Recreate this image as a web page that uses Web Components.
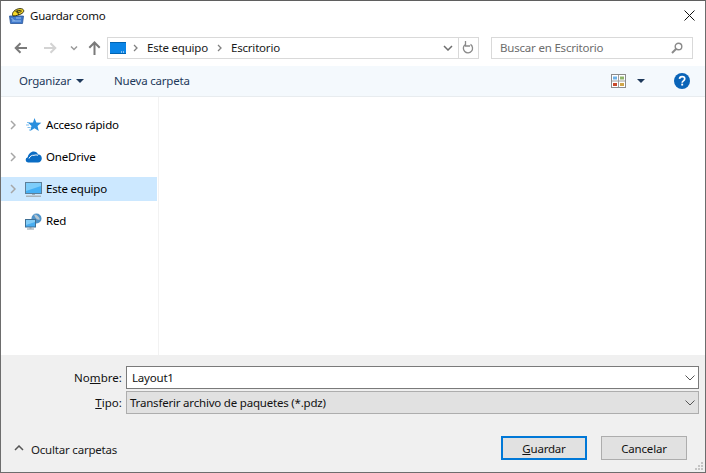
<!DOCTYPE html>
<html lang="es"><head><meta charset="utf-8"><title>Guardar como</title>
<style>html,body{margin:0;padding:0;background:#fff}body{font:12px "Noto Sans","Open Sans",sans-serif;color:#000}</style>
</head><body>
<file-dialog>
  <title-bar slot="title">Guardar como</title-bar>
  <nav-bar slot="nav"></nav-bar>
  <tool-bar slot="tools"></tool-bar>
  <nav-tree slot="tree">
    <tree-row icon="star">Acceso rápido</tree-row>
    <tree-row icon="cloud">OneDrive</tree-row>
    <tree-row icon="pc" selected>Este equipo</tree-row>
    <tree-row icon="net" nochevron>Red</tree-row>
  </nav-tree>
  <save-panel slot="bottom"></save-panel>
</file-dialog>
<script>
const def=(name,html)=>customElements.define(name,class extends HTMLElement{
  connectedCallback(){ if(this.shadowRoot) return; const r=this.attachShadow({mode:'open'}); r.innerHTML=typeof html==='function'?html(this):html; }
});
const FONT='font-family:"Noto Sans","Open Sans",sans-serif;font-size:11.5px;letter-spacing:-.2px;';

def('file-dialog',`<style>
:host{display:grid;width:706px;height:473px;box-sizing:border-box;border:1px solid #6d6d6d;border-top-color:#5f5f5f;grid-template-rows:29px 36px 31px 1fr 117px;background:#fff;${FONT}overflow:hidden;position:relative}
.main{display:grid;grid-template-columns:156px 2px 1fr;min-height:0}
.div{border-right:1px solid #f2f2f2;}
</style>
<slot name="title"></slot><slot name="nav"></slot><slot name="tools"></slot>
<div class="main"><slot name="tree"></slot><div class="div"></div><div></div></div>
<slot name="bottom"></slot>`);

def('title-bar',`<style>
:host{display:flex;align-items:center;padding:0 10px 0 8px;gap:5px;height:29px;color:#000}
.t{flex:1;color:#111}
svg{display:block}
</style>
<svg width="16" height="16" viewBox="0 0 16 16"><path d="M.5 8h14l-1 7.500H1.500z" fill="#3f78cc" stroke="#2a5597" stroke-width=".8"/><path d="M2.500 10l3 3M7 10h5M3 13h9" stroke="#9cc2ee"/><path d="M4 8C2 5 6 .8 11 .6c4-.2 5 3 2 4.800-2.500 1.500-6 2.600-9 2.600z" fill="#f6d92a" stroke="#26260e" stroke-width=".9"/><path d="M6.500 3.500c2-1.200 4.500-1.400 6-.4-1.200 1.400-3.500 1.500-5.500.7M8.500 3l1 4" fill="none" stroke="#26260e" stroke-width=".9"/></svg>
<span class="t"><slot></slot></span>
<svg width="11" height="11" viewBox="0 0 11 11"><path d="M.5.5l10 10M10.500.5l-10 10" stroke="#111" stroke-width="1"/></svg>`);

def('nav-bar',`<style>
:host{display:flex;align-items:center;height:36px;box-sizing:border-box;padding:0 12px 1px 13px;color:#000}
svg{display:block;flex:none}
.nb{display:flex;width:93px;flex:none;align-items:center}
.addr{flex:none;width:372px;height:22px;box-sizing:border-box;border:1px solid #d9d9d9;display:flex;align-items:center;padding-left:2px;color:#1a1a1a}
.addr .c{margin:0 9px 0 7px}
.addr span{white-space:nowrap}
.sp{flex:1}
.sep{width:1px;height:20px;background:#d9d9d9;margin:0 3px 0 5px}
.search{flex:none;width:202px;height:22px;box-sizing:border-box;border:1px solid #d9d9d9;margin-left:12px;display:flex;align-items:center;padding:0 9px 0 8px;color:#6d6d6d}
</style>
<div class="nb">
<svg width="13" height="12" viewBox="0 0 13 12"><path d="M13 6H2M6.500 1.200L1.700 6l4.800 4.800" fill="none" stroke="#7a7a7a" stroke-width="2"/></svg>
<svg style="margin-left:17px" width="13" height="12" viewBox="0 0 13 12"><path d="M0 6h11M6.500 1.200L11.300 6l-4.800 4.800" fill="none" stroke="#d3d3d3" stroke-width="2"/></svg>
<svg style="margin-left:13px" width="8" height="6" viewBox="0 0 8 6"><path d="M1 1.500l3 3 3-3" fill="none" stroke="#9a9a9a" stroke-width="1.500"/></svg>
<svg style="margin-left:10px" width="13" height="14" viewBox="0 0 13 14"><path d="M6.500 14V2M1.300 6.700L6.500 1.500l5.200 5.200" fill="none" stroke="#7a7a7a" stroke-width="2"/></svg>
</div>
<div class="addr">
<svg width="16" height="12" viewBox="0 0 16 12"><rect width="16" height="12" fill="#0a84e6"/><rect x="0" y="0" width="16" height="1" fill="#0063b1"/><rect x="0" y="11" width="16" height="1" fill="#0063b1"/><path d="M11 10h1M13 10h1" stroke="#fff"/></svg>
<svg class="c" width="5" height="8" viewBox="0 0 5 8"><path d="M1 1l3 3-3 3" fill="none" stroke="#808080" stroke-width="1.300"/></svg>
<span>Este equipo</span>
<svg class="c" style="margin-left:9px;margin-right:9px" width="5" height="8" viewBox="0 0 5 8"><path d="M1 1l3 3-3 3" fill="none" stroke="#808080" stroke-width="1.300"/></svg>
<span>Escritorio</span>
<span class="sp"></span>
<svg width="10" height="6" viewBox="0 0 10 6"><path d="M1 1l4 4 4-4" fill="none" stroke="#6e6e6e" stroke-width="1.500"/></svg>
<div class="sep"></div>
<svg style="margin-right:4px" width="12" height="14" viewBox="0 0 12 14"><path d="M8.500 3.400A4.600 4.600 0 1 1 3 3.700" fill="none" stroke="#8a8a8a" stroke-width="1.300"/><path d="M3.500 0v5H8" fill="none" stroke="#8a8a8a" stroke-width="1.300"/></svg>
</div>
<div class="search"><span style="flex:1">Buscar en Escritorio</span>
<svg width="12" height="12" viewBox="0 0 12 12"><circle cx="7.500" cy="4.500" r="3.300" fill="none" stroke="#8a8a8a" stroke-width="1.400"/><path d="M5 7l-4 4" stroke="#8a8a8a" stroke-width="2"/></svg></div>`);

def('tool-bar',`<style>
:host{display:flex;align-items:center;height:31px;box-sizing:border-box;background:#f4f9fd;border-bottom:1px solid #e8ecef;padding:0 15px 1px 18px;color:#1e395b}
svg{display:block;flex:none}
.sp{flex:1}
</style>
<span>Organizar</span>
<svg style="margin-left:5px" width="8" height="4" viewBox="0 0 8 4"><path d="M0 0h8L4 4z" fill="#1e395b"/></svg>
<span style="margin-left:30px">Nueva carpeta</span>
<span class="sp"></span>
<svg width="15" height="14" viewBox="0 0 15 14"><rect x=".5" y=".5" width="14" height="13" fill="#fff" stroke="#8c8c8c"/><path d="M7.500 1v12M1 7h13" stroke="#9c9c9c"/><rect x="2" y="2.500" width="4" height="3" fill="#6fb1e6"/><rect x="9" y="2.500" width="4" height="3" fill="#8fb56a"/><rect x="2" y="9" width="4" height="3" fill="#c8492b"/><rect x="9" y="9" width="4" height="3" fill="#d0a64a"/></svg>
<svg style="margin-left:11px" width="8" height="4" viewBox="0 0 8 4"><path d="M0 0h8L4 4z" fill="#1e395b"/></svg>
<svg style="margin-left:29px" width="16" height="16" viewBox="0 0 17 17"><circle cx="8.500" cy="8.500" r="8.500" fill="#0a64b8"/><path d="M5.800 6.300C6 4.600 7.200 3.800 8.600 3.800c1.600 0 2.800 1 2.800 2.400 0 2.200-2.700 2-2.700 4.100" fill="none" stroke="#fff" stroke-width="1.800"/><rect x="7.700" y="11.300" width="2" height="2" fill="#fff"/></svg>`);

def('nav-tree',`<style>:host{display:flex;flex-direction:column;gap:8px;padding-top:16px;min-width:0;color:#000}</style><slot></slot>`);

const ICONS={
star:`<svg width="17" height="16" viewBox="0 0 17 16"><path d="M9.500 1l1.800 4.400 5 .4-3.800 3.100 1.300 5-4.300-2.700-4.300 2.700 1.300-5L3 5.800l5-.4z" fill="#2a8fde"/><path d="M2 5.500h3M1 8h3M2.500 10.500h3M4 13h2" stroke="#7cbcec"/></svg>`,
cloud:`<svg width="17" height="12" viewBox="0 0 17 12"><path d="M3 11.500a2.700 2.700 0 0 1-.3-5.300C3.200 3 6 .5 8.700.5c2 0 3.700 1.200 4.400 3 2-.2 3.700 1.500 3.700 3.800 0 2.500-1.800 4.200-3.800 4.200z" fill="#0a6cc4"/><path d="M4 7.500c1-2.500 3-3.500 5-3.200 1.500-.5 2.800-.4 4 0" fill="none" stroke="#fff" stroke-width="1"/></svg>`,
pc:`<svg width="17" height="15" viewBox="0 0 17 15"><rect x=".5" y=".5" width="16" height="11" fill="#45b0f5" stroke="#5c7f99"/><path d="M1 1h15v3L1 9z" fill="#7dcdfa"/><rect x="7" y="12" width="3" height="1" fill="#9fb0bc"/><rect x="1" y="13.500" width="15" height="1.500" fill="#a8b2b8"/></svg>`,
net:`<svg width="17" height="17" viewBox="0 0 17 17"><circle cx="11.500" cy="5.500" r="5" fill="#4f93c9"/><path d="M9 1.500c3 0 5 2 6 5-2 .5-4-.5-5-2.500z" fill="#b5c5d0"/><rect x=".5" y="6.500" width="10" height="7.500" fill="#49aef2" stroke="#3f6f94"/><path d="M1 7h9v2L1 12z" fill="#83cdf7"/><rect x="4.500" y="14" width="2" height="1.500" fill="#8a9aa6"/><rect x="2" y="15.500" width="7" height="1" fill="#8a9aa6"/></svg>`};
def('tree-row',el=>`<style>
:host{display:flex;align-items:center;height:24px;box-sizing:border-box;padding-left:9px;${el.hasAttribute('selected')?'background:#cce8ff;':''}}
.c{width:6px;height:10px;flex:none;margin-right:9px}
.i{width:21px;flex:none;display:flex;justify-content:flex-start;}
svg{display:block}
span.t{margin-top:-1px}
</style>
<svg class="c" viewBox="0 0 6 10" style="${el.hasAttribute('nochevron')?'visibility:hidden':''}"><path d="M1 1l4 4-4 4" fill="none" stroke="#a6a6a6" stroke-width="1.500"/></svg>
<span class="i">${ICONS[el.getAttribute('icon')]}</span><span class="t"><slot></slot></span>`);

def('combo-field',el=>{const g=el.hasAttribute('disabled');return `<style>
:host{display:flex;align-items:center;height:23px;box-sizing:border-box;border:1px solid ${g?'#adadad':'#7a7a7a'};background:${g?'#e1e1e1':'#fff'};padding:0 3px 0 ${g?'3px':'5px'};color:#111}
span{flex:1}
svg{display:block}
</style><span><slot></slot></span>
<svg width="10" height="6" viewBox="0 0 10 6"><path d="M.5.500L5 5 9.500.5" fill="none" stroke="#555" stroke-width="1"/></svg>`});

def('push-button',el=>{const p=el.hasAttribute('primary');return `<style>
:host{display:flex;align-items:center;justify-content:center;width:86px;height:24px;box-sizing:border-box;background:#e1e1e1;border:${p?'2px solid #0078d7':'1px solid #adadad'};color:#111}
</style><slot></slot>`});

def('save-panel',`<style>
:host{display:block;background:#f0f0f0;height:117px;box-sizing:border-box;padding:11px 6px 0 0;color:#111}
.f{display:grid;grid-template-columns:121px 1fr;column-gap:4px;row-gap:2px;align-items:center}
.l{text-align:right;letter-spacing:.05px}
u{text-underline-offset:1px}
.b{display:flex;align-items:center;margin-top:22px;padding:0 12px 0 13px}
.sp{flex:1}
svg{display:block}
push-button+push-button{margin-left:14px}
</style>
<div class="f"><span class="l">No<u>m</u>bre:</span><combo-field>Layout1</combo-field>
<span class="l"><u>T</u>ipo:</span><combo-field disabled>Transferir archivo de paquetes (*.pdz)</combo-field></div>
<div class="b">
<svg width="10" height="6" viewBox="0 0 10 6"><path d="M1 5l4-4 4 4" fill="none" stroke="#555" stroke-width="1.500"/></svg>
<span style="margin-left:7px;margin-top:2px;color:#1a1a1a">Ocultar carpetas</span>
<span class="sp"></span>
<push-button primary><span><u>G</u>uardar</span></push-button>
<push-button>Cancelar</push-button>
</div>
<svg style="position:absolute;right:1px;bottom:1px" width="10" height="10" viewBox="0 0 10 10"><path d="M7 1h2v2H7zM4 4h2v2H4zM7 4h2v2H7zM1 7h2v2H1zM4 7h2v2H4zM7 7h2v2H7z" fill="#c4c4c4"/></svg>`);
</script>
</body></html>
